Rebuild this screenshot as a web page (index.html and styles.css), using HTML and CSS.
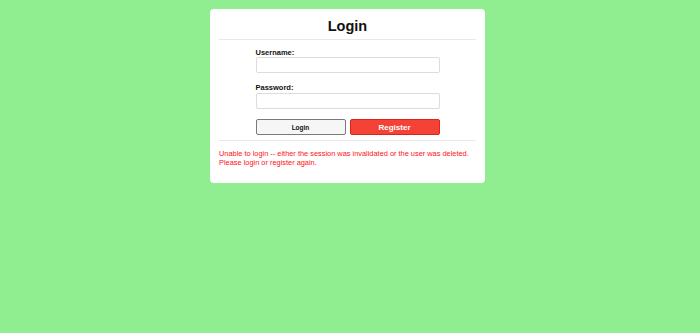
FILE: index.html
```html
<!DOCTYPE html>
<html lang="en">
<head>
  <meta charset="UTF-8" />
  <title>Login</title>
  <link rel="stylesheet" href="styles.css">
</head>
<body>
  <div class="card">
    <h1>Login</h1>
    <hr>
    <form class="login-form" onsubmit="return false;">
      <label for="username">Username:</label>
      <input type="text" id="username">

      <label for="password">Password:</label>
      <input type="password" id="password" class="last">

      <div class="buttons">
        <button type="submit" class="btn-login">Login</button>
        <button type="button" class="btn-register">Register</button>
      </div>
    </form>
    <hr>
    <p class="error">Unable to login -- either the session was invalidated or the user was deleted.<br>
    Please login or register again.</p>
  </div>
</body>
</html>
```

FILE: styles.css
```css
body {
  font-family: "Liberation Sans", Arial, sans-serif;
  background-color: #90ee90;
  margin: 0;
  padding: 9px 5px 0 0;
}
.card {
  width: 275px;
  box-sizing: border-box;
  margin: 0 auto;
  background: #fff;
  border-radius: 4px;
  padding: 9px 9px 9px;
}
.card h1 {
  margin: 0;
  font-size: 14.5px;
  line-height: 16px;
  text-align: center;
  color: #111;
}
.card hr {
  border: none;
  border-top: 1px solid #e8e8e8;
  margin: 5px 0 0;
}
.login-form {
  width: 184px;
  margin: 9px auto 0;
}
.login-form label {
  display: block;
  font-size: 7.5px;
  line-height: 8px;
  font-weight: bold;
  color: #111;
  margin-bottom: 0;
}
.login-form input {
  display: block;
  width: 100%;
  height: 16px;
  box-sizing: border-box;
  border: 1px solid #dcdcdc;
  border-radius: 2px;
  padding: 0 3px;
  margin: 0 0 11px;
  font-size: 7px;
}
.login-form input.last {
  margin-bottom: 10px;
}
.login-form input + label {
  margin-bottom: 1px;
}
.buttons {
  display: flex;
  gap: 4px;
}
.buttons button {
  flex: 1;
  height: 16px;
  border-radius: 2px;
  font-family: "Liberation Sans", Arial, sans-serif;
  font-weight: bold;
  padding: 0;
  cursor: pointer;
}
.btn-login {
  background: #f6f6f6;
  border: 1px solid #7a7a7a;
  color: #111;
  font-size: 6.5px;
}
.btn-register {
  background: #f44336;
  border: 1px solid #d8261a;
  color: #fff;
  font-size: 8px;
}
.error {
  margin: 8px 0 7px;
  font-size: 7.4px;
  line-height: 9px;
  color: #ff1010;
}
```
